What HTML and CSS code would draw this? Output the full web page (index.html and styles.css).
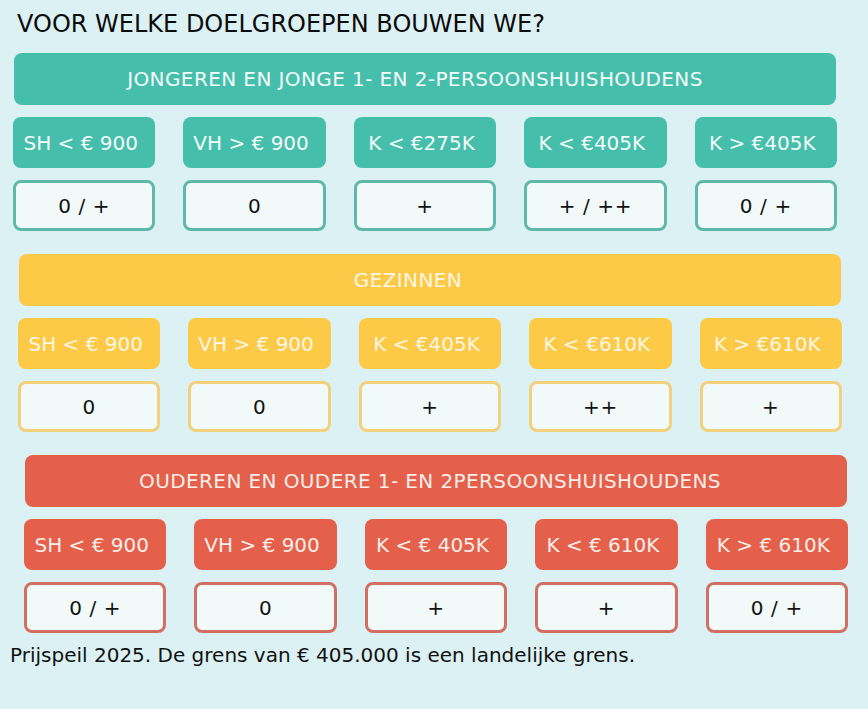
FILE: index.html
```
<!DOCTYPE html>
<html lang="nl">
<head>
<meta charset="utf-8">
<title>Voor welke doelgroepen bouwen we?</title>
<link rel="stylesheet" href="styles.css">
</head>
<body>
<main class="page">
  <h1 class="title">VOOR WELKE DOELGROEPEN BOUWEN WE?</h1>

  <section class="group group--teal group--s1">
    <div class="group-head">JONGEREN EN JONGE 1- EN 2-PERSOONSHUISHOUDENS</div>
    <div class="row">
      <div class="chip">SH &lt; € 900</div>
      <div class="chip">VH &gt; € 900</div>
      <div class="chip">K &lt; €275K</div>
      <div class="chip">K &lt; €405K</div>
      <div class="chip">K &gt; €405K</div>
    </div>
    <div class="row">
      <div class="val">0 / +</div>
      <div class="val">0</div>
      <div class="val">+</div>
      <div class="val">+ / ++</div>
      <div class="val">0 / +</div>
    </div>
  </section>

  <section class="group group--yellow group--s2">
    <div class="group-head">GEZINNEN</div>
    <div class="row">
      <div class="chip">SH &lt; € 900</div>
      <div class="chip">VH &gt; € 900</div>
      <div class="chip">K &lt; €405K</div>
      <div class="chip">K &lt; €610K</div>
      <div class="chip">K &gt; €610K</div>
    </div>
    <div class="row">
      <div class="val">0</div>
      <div class="val">0</div>
      <div class="val">+</div>
      <div class="val">++</div>
      <div class="val">+</div>
    </div>
  </section>

  <section class="group group--red group--s3">
    <div class="group-head">OUDEREN EN OUDERE 1- EN 2PERSOONSHUISHOUDENS</div>
    <div class="row">
      <div class="chip">SH &lt; € 900</div>
      <div class="chip">VH &gt; € 900</div>
      <div class="chip">K &lt; € 405K</div>
      <div class="chip">K &lt; € 610K</div>
      <div class="chip">K &gt; € 610K</div>
    </div>
    <div class="row">
      <div class="val">0 / +</div>
      <div class="val">0</div>
      <div class="val">+</div>
      <div class="val">+</div>
      <div class="val">0 / +</div>
    </div>
  </section>

  <p class="note">Prijspeil 2025. De grens van € 405.000 is een landelijke grens.</p>
</main>
</body>
</html>
```

FILE: styles.css
```
* { box-sizing: border-box; }

html, body {
  margin: 0;
  padding: 0;
  background: #dcf1f3;
}

body {
  font-family: "DejaVu Sans", Verdana, sans-serif;
  color: #111;
  width: 868px;
  height: 709px;
  overflow: hidden;
}

.page {
  padding-top: 8px;
}

.title {
  margin: 0 0 0 17px;
  font-size: 24px;
  font-weight: normal;
  line-height: 32px;
  color: #0c0c0c;
}

.group {
  width: 824px;
  display: flex;
  flex-direction: column;
  gap: 12px;
}

.group--s1 { margin: 13px 0 0 13px; }
.group--s2 { margin: 23px 0 0 18px; }
.group--s3 { margin: 23px 0 0 24px; }

.group-head {
  width: 822px;
  margin-left: 1px;
  height: 52px;
  border-radius: 8px;
  display: flex;
  align-items: center;
  justify-content: center;
  color: #f4fbf9;
  font-size: 20px;
  letter-spacing: 0.4px;
}

.group--s1 .group-head { padding-right: 20px; }
.group--s2 .group-head { padding-right: 44px; }
.group--s3 .group-head { padding-right: 12px; }

.row {
  display: grid;
  grid-template-columns: repeat(5, 1fr);
  column-gap: 28px;
}

.chip {
  height: 51px;
  border-radius: 8px;
  display: flex;
  align-items: center;
  justify-content: center;
  padding-right: 7px;
  color: #f4fbf9;
  font-size: 20px;
}

.val {
  height: 51px;
  border-radius: 8px;
  border: 3px solid;
  background: #f1f9f9;
  display: flex;
  align-items: center;
  justify-content: center;
  font-size: 20px;
  letter-spacing: 0.6px;
  color: #111;
}

.group--teal .group-head,
.group--teal .chip { background: #45bfab; }
.group--teal .val { border-color: #5fb8a9; }

.group--yellow .group-head,
.group--yellow .chip { background: #fdca47; color: #fdf6e4; }
.group--yellow .val { border-color: #f2d07c; }

.group--red .group-head,
.group--red .chip { background: #e4604b; color: #fbeeea; }
.group--red .val { border-color: #d16f62; }

.note {
  margin: 10px 0 0 10px;
  font-size: 20px;
  line-height: 24px;
  color: #111;
}
```
